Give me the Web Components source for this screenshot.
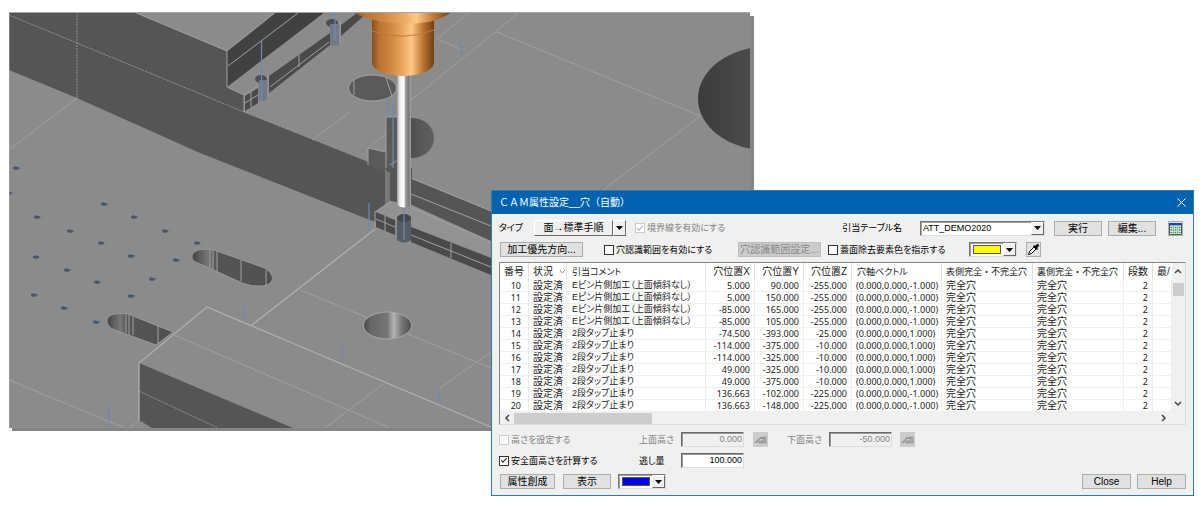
<!DOCTYPE html>
<html lang="ja">
<head>
<meta charset="utf-8">
<title>CAM属性設定</title>
<style>
body { margin: 0; background: #fff; font: 10px/12px "Liberation Sans", "Noto Sans CJK JP", sans-serif; color: #000; }
</style>
</head>
<body>
<cam-page></cam-page>
<script>
const define = (name, html, setup) => {
  const tpl = document.createElement('template');
  tpl.innerHTML = html;
  customElements.define(name, class extends HTMLElement {
    connectedCallback() {
      if (this.shadowRoot) return;
      this.attachShadow({ mode: 'open' }).append(tpl.content.cloneNode(true));
      if (setup) setup(this, this.shadowRoot);
    }
  });
};

/* ---------- 3D view ---------- */
define('machining-view', `
<style>
:host { display: block; }
svg { display: block; width: 100%; height: auto; }
.l { fill: none; stroke: #a0a0a0; stroke-width: 1; }
.w { fill: none; stroke: #b0b0b0; stroke-width: 1.3; }
.d { fill: none; stroke: #929292; stroke-width: 1; stroke-dasharray: 2 1; }
.b { fill: none; stroke: #6d8ab5; stroke-width: 1.2; }
.k { fill: #555; }
</style>
<svg viewBox="9 12 745 420" role="img" aria-label="加工シミュレーション">
  <defs>
    <linearGradient id="or"><stop offset="0" stop-color="#8a4f1c"/><stop offset=".12" stop-color="#b87432"/><stop offset=".3" stop-color="#cf8740"/><stop offset=".5" stop-color="#eba860"/><stop offset=".64" stop-color="#ffc888"/><stop offset=".82" stop-color="#bd7632"/><stop offset="1" stop-color="#6f3f14"/></linearGradient>
    <linearGradient id="st"><stop offset="0" stop-color="#999"/><stop offset=".2" stop-color="#eee"/><stop offset=".5" stop-color="#fff"/><stop offset=".62" stop-color="#999"/><stop offset=".85" stop-color="#777"/><stop offset="1" stop-color="#aaa"/></linearGradient>
    <linearGradient id="big"><stop offset="0" stop-color="#3c3c3c"/><stop offset=".7" stop-color="#585858"/><stop offset="1" stop-color="#606060"/></linearGradient>
    <linearGradient id="hole"><stop offset="0" stop-color="#444"/><stop offset=".15" stop-color="#666"/><stop offset=".5" stop-color="#777"/><stop offset=".63" stop-color="#b5b5b5"/><stop offset=".8" stop-color="#777"/><stop offset="1" stop-color="#4a4a4a"/></linearGradient>
    <linearGradient id="sl"><stop offset="0" stop-color="#444"/><stop offset=".2" stop-color="#777"/><stop offset=".3" stop-color="#555"/><stop offset="1" stop-color="#505050"/></linearGradient>
    <clipPath id="c"><rect x="9" y="12" width="741" height="416"/></clipPath>
  </defs>
  <rect x="12" y="16" width="742" height="415" fill="#858585"/>
  <g clip-path="url(#c)">
    <rect x="9" y="12" width="741" height="416" fill="#8b8b8b"/>
    <path class="k" d="M9 12H134L227 51V87L244 95V112L372 163L491 211V242L411 208L376 222L370 220L200 153L77 98L9 70Z"/>
    <path fill="#414141" d="M227 51L276 12H325L227 87Z"/>
    <path class="l" d="M228 66L298 13M227 51V87L244 95V112"/>
    <path class="d" d="M9 15L77 43L244 112L372 163M77 12V98"/>
    <path class="l" d="M134 12L227 51L276 12M244 95L262 83M9 150L77 98M411 178L491 211"/>
    <path fill="#4a4a4a" d="M245 96L258 88V103L245 111Z M269 76L330 33V45L269 93Z M341 25L357 13H367L341 36Z"/>
    <path class="l" d="M245 103L258 95M251 92V107M270 87L329 42M299 55V67"/>
    <ellipse cx="261" cy="79" rx="6" ry="4" fill="#4b4f55"/>
    <path d="M259 80H268V98Q264 102 259 100Z" fill="#717b88"/>
    <ellipse cx="332" cy="23" rx="6" ry="4" fill="#4b4f55"/>
    <path d="M330 24H340V44Q336 47 330 45Z" fill="#717b88"/>
    <path class="b" d="M261.500 40V100M335 12V40"/>
    <path class="l" d="M268 76V98M340 20V44"/>
    <ellipse cx="372.500" cy="88" rx="24" ry="13" fill="#5a5a5a" stroke="#a4a4a4"/>
    <path class="l" d="M354 80V95M386 78L392 96M411 100L520 12M438 38L470 12M435 38L462 50M497 32L700 116M700 116L590 200M368 148L386 134M350 112L312 140"/>
    <ellipse cx="412" cy="138" rx="22" ry="20" fill="url(#big)"/>
    <path fill="#5a5a5a" d="M386 117H410V170H386Z M368 148L386 152V172L368 165Z"/>
    <path fill="#8b8b8b" d="M368 148L386 136V152Z"/>
    <path class="l" d="M368 165V148L386 152M386 168V117H398M386 170V205M390 165L398 160"/>
    <path class="b" d="M393 100V170M388 97V115"/>
    <path fill="#777" d="M386 172H390V203H386Z"/>
    <path class="k" d="M390 168H412V207L390 203Z"/>
    <ellipse cx="768" cy="98.500" rx="70" ry="52" fill="url(#big)"/>
    <path class="l" d="M411 194L491 226"/>
    <path fill="#929292" d="M375 212L391 201L412 205L491 241V257L412 227L376 212Z"/>
    <path fill="#4a4a4a" d="M376 213L395 220V235L376 227Z M411 227L491 258V275L411 242Z"/>
    <path class="l" d="M375 228V212L391 201M376 219L395 227M385 216V231M411 235L491 267M451 243V258M411 208L491 242"/>
    <path d="M397 217H411V240Q404 245 397 240Z" fill="#565c63"/>
    <ellipse cx="404" cy="218" rx="7" ry="4" fill="#454545"/>
    <path class="b" d="M404 207V240M369 203V233"/>
    <path class="w" d="M375 229L252 325"/>
    <path d="M397 70H411V205Q404 210 397 205Z" fill="url(#st)"/>
    <path d="M372 18H434V62C434 71 418 76 403 76C388 76 372 71 372 62Z" fill="url(#or)"/>
    <path d="M372 31Q403 42 434 30" fill="none" stroke="#c47c38" stroke-width="1"/>
    <path d="M353 12H452Q440 20 428 22Q402 26 378 21Q362 18 353 12Z" fill="url(#or)"/>
    <path d="M192 257C192 248 208 248 217 251L262 267C277 273 276 287 258 286C250 286 245 284 240 282L200 264C195 262 192 260 192 257Z" fill="url(#sl)" stroke="#999"/>
    <path class="l" d="M210 250V268M213 250V270M217 251V272M241 260V281M266 270V285"/>
    <path d="M107 321C107 312 125 312 133 316L173 332L156 345L115 330C110 328 107 325 107 321Z" fill="url(#sl)" stroke="#999"/>
    <path class="l" d="M126 315V333M129 315V335M133 317V335M158 326V343"/>
    <path class="k" d="M139 363L293 428H152L139 420Z"/>
    <path class="w" d="M139 420V363L207 307L491 427"/>
    <path class="d" d="M139 391L218 428"/>
    <path class="l" d="M172 334L390 428M300 290L491 368M9 380L125 428M383 384L325 428M491 352L440 388M139 420L130 428"/>
    <ellipse cx="387.500" cy="325.500" rx="24" ry="13.500" fill="url(#hole)" stroke="#a8a8a8"/>
    <path class="b" d="M109 403V428M244 306V320M342 345V360M439 390V402M461 40V55"/>
    <g id="dots"></g>
    <path d="M9 428V12.500H750" fill="none" stroke="#a5a5a5"/>
  </g>
</svg>`, (el, root) => {
  const pts = [[16,168],[9,193],[104,204],[37,217],[134,217],[70,231],[165,231],[101,243],[197,243],[36,257],[131,256],[176,260],[67,270],[97,282],[152,279],[34,295],[131,296],[64,308],[96,322]];
  root.querySelector('#dots').innerHTML = pts.map(([x, y]) =>
    `<ellipse cx="${x}" cy="${y}" rx="3" ry="1.8" fill="#4a566a"/><path d="M${x + 3} ${y}h2" stroke="#6f7a8c"/><path d="M${x + 1} ${y - 5}v4" stroke="#8292ab"/>`).join('');
});

/* ---------- controls ---------- */
define('cam-button', `
<style>
:host { display: block; }
button { display: block; width: 100%; height: 15px; padding: 0; border: 1px solid #adadad; background: #e1e1e1; font: inherit; color: inherit; line-height: 13px; text-align: center; white-space: nowrap; font-feature-settings: "palt"; }
button:disabled { background: #ccc; border-color: #bfbfbf; color: #8a8a8a; }
</style>
<button type="button"><slot></slot></button>`, (el, root) => {
  root.querySelector('button').disabled = el.hasAttribute('disabled');
});

define('cam-split-button', `
<style>
:host { display: grid; grid-template-columns: 1fr 13px; }
button { height: 16px; padding: 0; font: inherit; color: inherit; background: #f0f0f0; border: 1px solid; border-color: #fff #696969 #696969 #fff; line-height: 14px; white-space: nowrap; }
button:first-child { border-right-color: #a0a0a0; }
svg { display: block; margin: auto; }
</style>
<button type="button"><slot></slot></button><button type="button" aria-label="候補を開く"><svg width="7" height="4"><path d="M0 0h7L3.500 4z"/></svg></button>`);

define('cam-check', `
<style>
:host { display: block; font-size: 9px; }
label { display: flex; align-items: center; gap: 2px; white-space: nowrap; font-feature-settings: "palt"; }
input { appearance: none; flex: none; box-sizing: border-box; width: 10px; height: 10px; margin: 0; border: 1px solid #333; background: #fff; display: grid; place-items: center; }
input:checked::before { content: ""; width: 6px; height: 3px; box-sizing: border-box; border: solid #222; border-width: 0 0 1px 1px; transform: rotate(-45deg); margin-bottom: 2px; }
input:disabled { border-color: #ccc; }
input:disabled::before { border-color: #aaa; }
:host([disabled]) { color: #838383; }
</style>
<label><input type="checkbox"><span><slot></slot></span></label>`, (el, root) => {
  const box = root.querySelector('input');
  box.checked = el.hasAttribute('checked');
  box.disabled = el.hasAttribute('disabled');
});

const comboStyle = `
.box { display: grid; grid-template-columns: 1fr 13px; border: 1px solid; border-color: #767676 #ddd #ddd #767676; box-shadow: inset 1px 1px #a0a0a0; background: #fff; height: 13px; }
select { appearance: none; grid-area: 1 / 1 / 2 / 3; width: 100%; height: 13px; border: 0; margin: 0; padding: 0 13px 0 2px; background: none; font: inherit; color: inherit; font-size: 9px; border-radius: 0; }
.arrow { grid-area: 1 / 2; box-sizing: border-box; height: 13px; border: 1px solid; border-color: #fff #696969 #696969 #fff; background: #f0f0f0; display: grid; place-items: center; pointer-events: none; }
svg { display: block; }`;
const arrow = `<span class="arrow"><svg width="7" height="4"><path d="M0 0h7L3.500 4z"/></svg></span>`;

define('cam-combo', `
<style>
:host { display: block; font-size: 9px; }
.field { display: flex; align-items: center; gap: 18px; font-feature-settings: "palt"; }
label { flex: 1; text-align: right; white-space: nowrap; }
.box { width: 123px; }
${comboStyle}
</style>
<div class="field"><label for="s"></label><div class="box"><select id="s"></select>${arrow}</div></div>`, (el, root) => {
  root.querySelector('label').textContent = el.getAttribute('label');
  root.querySelector('select').add(new Option(el.getAttribute('value')));
});

define('color-combo', `
<style>
:host { display: block; }
${comboStyle}
.swatch { grid-area: 1 / 1; align-self: center; height: 7px; margin: 0 2px 0 3px; border: 1px solid #555; background: var(--swatch); pointer-events: none; }
</style>
<div class="box"><select></select><span class="swatch"></span>${arrow}</div>`, (el, root) => {
  root.querySelector('select').setAttribute('aria-label', el.getAttribute('label'));
});

define('num-field', `
<style>
:host { display: grid; grid-template-columns: 42px 63px; align-items: center; font-size: 9px; }
label { white-space: nowrap; font-feature-settings: "palt"; }
input { box-sizing: border-box; width: 100%; height: 15px; margin: 0; padding: 0 1px 2px 0; border: 1px solid; border-color: #696969 #ddd #ddd #696969; box-shadow: inset 1px 1px #999; background: #fff; font: inherit; text-align: right; color: inherit; border-radius: 0; }
input:disabled { background: #f0f0f0; }
:host([disabled]) { color: #838383; }
</style>
<label for="n"></label><input id="n" type="text">`, (el, root) => {
  root.querySelector('label').textContent = el.getAttribute('label');
  const input = root.querySelector('input');
  input.value = el.getAttribute('value');
  input.disabled = el.hasAttribute('disabled');
});

define('icon-button', `
<style>
:host { display: block; width: 15px; }
button { box-sizing: border-box; display: grid; place-items: center; width: 15px; height: 15px; padding: 0; border: 1px solid #adadad; background: #e1e1e1; }
button:disabled { background: #ccc; border-color: #ccc; }
</style>
<button type="button"><slot></slot></button>`, (el, root) => {
  const b = root.querySelector('button');
  b.disabled = el.hasAttribute('disabled');
  b.setAttribute('aria-label', el.getAttribute('label'));
});

/* ---------- hole list ---------- */
define('hole-table', `
<style>
:host { display: grid; grid-template-columns: 1fr 12px; grid-template-rows: auto 12px; border: 1px solid; border-color: #828790 #ddd #ddd #828790; background: #f0f0f0; padding-right: 1px; }
.view { overflow: hidden; background: #fff; }
table { table-layout: fixed; width: 100%; border-collapse: separate; border-spacing: 0; color: #222; }
th, td { padding: 0 4px; font-weight: normal; text-align: left; white-space: nowrap; overflow: hidden; box-sizing: border-box; border-right: 1px solid #ececec; border-bottom: 1px solid #f0f0f0; }
th { height: 17px; line-height: 14px; border-bottom: 0; border-color: #e0e0e0; }
td { height: 12px; line-height: 11px; }
th.small { font-size: 9px; }
th.kana, td.kana { font-size: 9px; font-feature-settings: "palt"; padding-left: 5px; }
td.n, td.v { font-family: "Noto Sans", sans-serif; font-size: 9px; }
.n { text-align: right; }
td.i { padding-right: 7px; }
th.s svg { margin-left: 6px; }
th.s { padding-right: 0; }
th:last-child { border-right: 0; padding-right: 0; }
.v-bar { display: flex; flex-direction: column; align-items: center; padding: 5px 0; }
.v-bar i { width: 11px; height: 13px; background: #cdcdcd; margin: 9px 0 auto; }
.h-bar { grid-column: 1; display: flex; align-items: center; padding: 0 5px 0 4px; gap: 4px; }
.h-bar i { width: 138px; height: 11px; background: #cdcdcd; margin-right: auto; }
.bar path { fill: none; stroke: #444; stroke-width: 1.500; }
svg { display: inline-block; flex: none; }
</style>
<div class="view"><table>
<colgroup><col style="width:29px"><col style="width:38px"><col style="width:139px"><col style="width:49px"><col style="width:49px"><col style="width:48px"><col style="width:90px"><col style="width:91px"><col style="width:91px"><col style="width:29px"><col></colgroup>
<thead><tr><th>番号</th><th class="s">状況<svg width="7" height="6"><path d="M1 1l2.500 3L6 1" fill="none" stroke="#888"/></svg></th><th class="kana">引当コメント</th><th class="n">穴位置X</th><th class="n">穴位置Y</th><th class="n">穴位置Z</th><th class="kana">穴軸ベクトル</th><th class="small">表側完全・不完全穴</th><th class="small">裏側完全・不完全穴</th><th>段数</th><th>最/</th></tr></thead>
<tbody></tbody></table></div>
<div class="v-bar bar"><svg width="8" height="6"><path d="M1 5l3-3 3 3"/></svg><i></i><svg width="8" height="6"><path d="M1 1l3 3 3-3"/></svg></div>
<div class="h-bar bar"><svg width="6" height="8"><path d="M5 1L2 4l3 3"/></svg><i></i><svg width="6" height="8"><path d="M1 1l3 3-3 3"/></svg></div>`, (el, root) => {
  const pin = 'Eピン片側加工（上面傾斜なし）', tap = '2段タップ止まり';
  const down = '(0.000,0.000,-1.000)', up = '(0.000,0.000,1.000)';
  const rows = [
    [10, pin, '5.000', '90.000', '-255.000', down],
    [11, pin, '5.000', '150.000', '-255.000', down],
    [12, pin, '-85.000', '165.000', '-255.000', down],
    [13, pin, '-85.000', '105.000', '-255.000', down],
    [14, tap, '-74.500', '-393.000', '-25.000', up],
    [15, tap, '-114.000', '-375.000', '-10.000', up],
    [16, tap, '-114.000', '-325.000', '-10.000', up],
    [17, tap, '49.000', '-325.000', '-10.000', up],
    [18, tap, '49.000', '-375.000', '-10.000', up],
    [19, tap, '136.663', '-102.000', '-225.000', down],
    [20, tap, '136.663', '-148.000', '-225.000', down]];
  root.querySelector('tbody').innerHTML = rows.map(([no, c, x, y, z, v]) =>
    `<tr><td class="n i">${no}</td><td>設定済</td><td class="kana">${c}</td><td class="n">${x}</td><td class="n">${y}</td><td class="n">${z}</td><td class="v">${v}</td><td>完全穴</td><td>完全穴</td><td class="n">2</td><td></td></tr>`).join('');
});

/* ---------- dialog ---------- */
const reach = `<svg width="13" height="9"><path d="M0 8L6 2h3v2H6L3 8z" fill="#999"/><path d="M5 6h4V2h3v6H5z" fill="#a8a8a8" stroke="#8c8c8c" stroke-width=".7"/></svg>`;
define('cam-dialog', `
<style>
:host { display: block; border: 1px solid #2f7cab; background: #f0f0f0; }
header { display: flex; align-items: center; justify-content: space-between; height: 23px; padding: 0 8px 0 7px; background: #0063b1; color: #fff; }
h1 { margin: 0; font-size: 10px; font-weight: normal; }
header button { display: grid; place-items: center; width: 8px; height: 20px; padding: 0; border: 0; background: none; }
.body { padding: 6px 7px; }
.row { display: grid; align-items: center; }
.one { grid-template-columns: 35px 92px 9px 92px 1fr 9px 48px 6px 48px 12px 16px; height: 16px; margin-right: 2px; }
.two { grid-template-columns: 1px 83px 21px 134px 83px 7px 141px 48px 9px 16px 1fr; height: 15px; margin: 6px 0 5px; }
.three, .four { grid-template-columns: 140px 105px 9px 19px 15px 105px 8px 15px; height: 15px; }
.three { margin-top: 7px; }
.four { margin: 6px 0; }
.five { grid-template-columns: 1px 55px 8px 48px 7px 48px 1fr 49px 6px 49px; height: 15px; }
.c1 { grid-column: 1; } .c2 { grid-column: 2; } .c3 { grid-column: 3; } .c4 { grid-column: 4; } .c5 { grid-column: 5; } .c6 { grid-column: 6; } .c7 { grid-column: 7; } .c8 { grid-column: 8; } .c9 { grid-column: 9; } .c10 { grid-column: 10; } .c11 { grid-column: 11; }
.type { font-size: 9px; font-feature-settings: "palt"; }
</style>
<header><h1>ＣＡＭ属性設定__穴（自動）</h1><button type="button" aria-label="閉じる"><svg width="9" height="9"><path d="M.5 .5l8 8m0-8l-8 8" stroke="#fff"/></svg></button></header>
<div class="body">
  <div class="row one">
    <span class="c1 type">タイプ</span>
    <cam-split-button class="c2">面→標準手順</cam-split-button>
    <cam-check class="c4" checked disabled>境界線を有効にする</cam-check>
    <cam-combo class="c5" label="引当テーブル名" value="ATT_DEMO2020"></cam-combo>
    <cam-button class="c7">実行</cam-button>
    <cam-button class="c9">編集...</cam-button>
    <icon-button class="c11" label="一覧表"><svg width="13" height="13"><path d="M.5 1.500h12v11H.5z" fill="#fff" stroke="#555"/><path d="M0 1h13v2.500H0z" fill="#1c4d9c"/><path d="M4.500 4v8M8.500 4v8" stroke="#aaa"/><path d="M1.500 5.500h2m2 0h2m2 0h2m-10 2.500h2m2 0h2m2 0h2m-10 2.500h2m2 0h2m2 0h2" stroke="#1b9b3c" stroke-width="1.500"/></svg></icon-button>
  </div>
  <div class="row two">
    <cam-button class="c2">加工優先方向...</cam-button>
    <cam-check class="c4">穴認識範囲を有効にする</cam-check>
    <cam-button class="c5" disabled>穴認識範囲設定...</cam-button>
    <cam-check class="c7">蓋面除去要素色を指示する</cam-check>
    <color-combo class="c8" label="要素色" style="--swatch:#ff0"></color-combo>
    <icon-button class="c10" label="色を拾う"><svg width="13" height="13"><path d="M1.500 11.500l1-3L7 4l2 2-4.500 4.500z" fill="#fff" stroke="#000"/><path d="M6 3l4 4 1-1-1-1 2-2q.5-2-2-2L8 3 7 2z"/></svg></icon-button>
  </div>
  <hole-table></hole-table>
  <div class="row three">
    <cam-check class="c1" disabled>高さを設定する</cam-check>
    <num-field class="c2" label="上面高さ" value="0.000" disabled></num-field>
    <icon-button class="c4" label="上面を指示" disabled>${reach}</icon-button>
    <num-field class="c6" label="下面高さ" value="-50.000" disabled></num-field>
    <icon-button class="c8" label="下面を指示" disabled>${reach}</icon-button>
  </div>
  <div class="row four">
    <cam-check class="c1" checked>安全面高さを計算する</cam-check>
    <num-field class="c2" label="逃し量" value="100.000"></num-field>
  </div>
  <div class="row five">
    <cam-button class="c2">属性創成</cam-button>
    <cam-button class="c4">表示</cam-button>
    <color-combo class="c6" label="表示色" style="--swatch:#00e"></color-combo>
    <cam-button class="c8">Close</cam-button>
    <cam-button class="c10">Help</cam-button>
  </div>
</div>`);

define('cam-page', `
<style>
:host { display: grid; grid-template-columns: 482fr 263fr 440fr; align-items: start; padding: 12px 9px 9px; }
machining-view { grid-area: 1 / 1 / 2 / 3; }
cam-dialog { grid-area: 1 / 2 / 2 / 4; margin-top: 178px; position: relative; }
</style>
<machining-view></machining-view>
<cam-dialog></cam-dialog>`);
</script>
</body>
</html>
